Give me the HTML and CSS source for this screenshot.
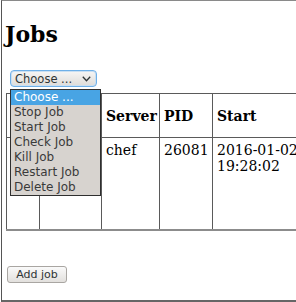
FILE: index.html
```html
<!DOCTYPE html>
<html>
<head>
<meta charset="utf-8">
<title>Jobs</title>
<link rel="stylesheet" href="styles.css">
</head>
<body>
<div class="frame">
  <h2 class="title">Jobs</h2>
  <div class="controls">
    <div class="select">
      <span class="select-label">Choose ...</span>
      <svg class="chevron" width="9" height="6" viewBox="0 0 9 6"><path d="M0.8 0.8 L4.5 4.8 L8.2 0.8" fill="none" stroke="#2e3436" stroke-width="1.3"/></svg>
    </div>
    <ul class="popup">
      <li class="opt active">Choose ...</li>
      <li class="opt">Stop Job</li>
      <li class="opt">Start Job</li>
      <li class="opt">Check Job</li>
      <li class="opt">Kill Job</li>
      <li class="opt">Restart Job</li>
      <li class="opt">Delete Job</li>
    </ul>
  </div>
  <table class="jobs">
    <thead>
      <tr>
        <th class="c-sel"></th>
        <th class="c-name"></th>
        <th class="c-server">Server</th>
        <th class="c-pid">PID</th>
        <th class="c-start">Start</th>
      </tr>
    </thead>
    <tbody>
      <tr class="row">
        <td class="c-sel"></td>
        <td class="c-name"></td>
        <td>chef</td>
        <td>26081</td>
        <td>2016-01-02 19:28:02</td>
      </tr>
    </tbody>
  </table>
  <div class="actions">
    <button class="btn" type="button">Add job</button>
  </div>
</div>
</body>
</html>
```
FILE: styles.css
```css
html, body {
  margin: 0;
  padding: 0;
  background: #fff;
  overflow: hidden;
}
body {
  font-family: "DejaVu Serif", serif;
  font-size: 14px;
  color: #000;
}
.frame {
  position: relative;
  box-sizing: border-box;
  margin-left: 1px;
  width: 400px;
  height: 302px;
  border-top: 1px solid #8a8a8a;
  border-left: 1px solid #555;
  border-bottom: 2px solid #666;
  padding-left: 4px;
}
.title {
  margin: 20px 0 0 -1px;
  font-family: "DejaVu Serif", serif;
  font-size: 22px;
  font-weight: bold;
  line-height: 26px;
}
.controls {
  margin: 23px 0 0 4px;
  height: 16px;
}
.select {
  box-sizing: border-box;
  width: 87px;
  height: 17px;
  border: 1px solid #6fb0e8;
  border-radius: 4px;
  background: linear-gradient(#f7f6f5, #dedcd9);
  box-shadow: inset 0 0 0 1px #c9dff2;
  display: flex;
  align-items: center;
  justify-content: space-between;
  padding: 0 5px 0 4px;
  font-family: "DejaVu Sans", sans-serif;
  font-size: 11.5px;
  color: #2e3436;
}
.select-label {
  line-height: 14px;
}
.chevron {
  display: block;
}
.popup {
  position: absolute;
  left: 8px;
  top: 88px;
  width: 91px;
  box-sizing: border-box;
  margin: 0;
  padding: 0;
  list-style: none;
  border: 1px solid #2f2f2f;
  background: #d7d3cf;
  z-index: 2;
  font-family: "DejaVu Sans", sans-serif;
  font-size: 12px;
  color: #3a3a3a;
}
.opt {
  height: 15px;
  line-height: 15px;
  padding-left: 3px;
  white-space: nowrap;
}
.opt.active {
  background: #48a4e4;
  color: #fff;
}
.jobs {
  margin: 7px 0 0 0;
  border-collapse: collapse;
  table-layout: fixed;
  width: 291px;
  border-bottom: 2px solid #8c8c8c;
}
.jobs th, .jobs td {
  border: 1px solid #5a5a5a;
  padding: 4px;
  font-size: 14px;
}
.jobs th {
  text-align: left;
  font-weight: bold;
  height: 35px;
  vertical-align: middle;
}
.jobs td {
  vertical-align: top;
  height: 83px;
}
.c-sel { width: 24px; }
.c-name { width: 53px; }
.c-server { width: 49px; }
.c-pid { width: 44px; }
.c-start { width: 86px; }
.actions {
  margin-top: 34px;
  padding-left: 1px;
}
.btn {
  box-sizing: border-box;
  height: 17px;
  width: 60px;
  margin: 0;
  padding: 0;
  border: 1px solid #a9a6a2;
  border-radius: 3px;
  background: linear-gradient(#fafafa, #e2e0dd);
  font-family: "DejaVu Sans", sans-serif;
  font-size: 11px;
  color: #2e3436;
  line-height: 15px;
}
```
